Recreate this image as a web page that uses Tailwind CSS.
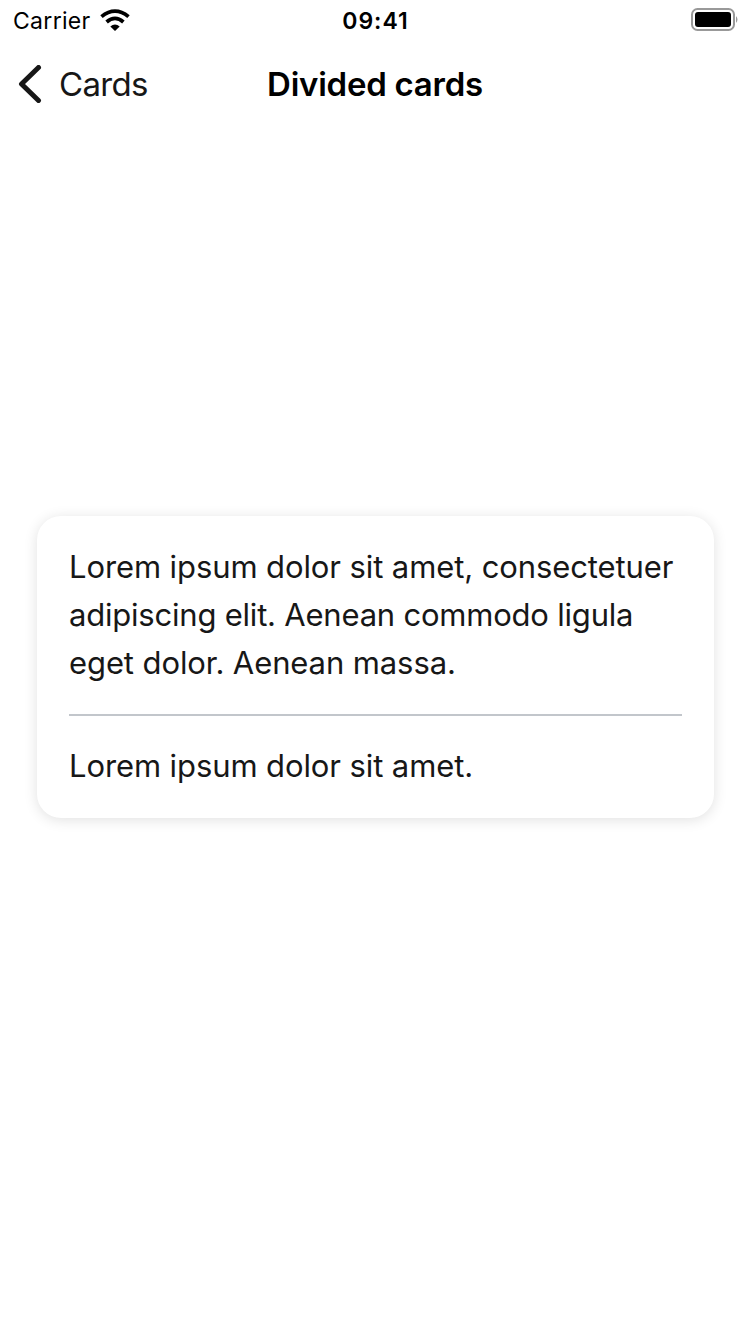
<!DOCTYPE html>
<html lang="en"><head><meta charset="utf-8"><title>Divided cards</title>
<script src="https://cdn.jsdelivr.net/npm/@tailwindcss/browser@4"></script></head>
<body class="bg-white">
<div class="w-[750px] h-[1334px] flex flex-col overflow-hidden font-['Inter',sans-serif] text-black">
<header>
<div class="h-10 grid grid-cols-3 items-center pl-[13px] pr-[11px]">
<div class="flex items-center gap-[9px]"><span class="text-[23px] leading-[38px] tracking-[0.3px] pt-0.5">Carrier</span>
<svg width="30" height="22" viewBox="0 0 30 22" fill="none" stroke="#000" stroke-width="3.800"><path d="M1.500 7.600Q15 -3.400 28.500 7.600"/><path d="M6.600 13Q15 5.800 23.400 13"/><path d="M15 22L10.300 17.500Q15 13.400 19.700 17.500Z" fill="#000" stroke="none"/></svg></div>
<div class="text-center text-[23px] font-semibold leading-[38px] tracking-[1px] pt-0.5 pr-px"><span>09:41</span></div>
<div class="flex justify-end"><svg width="48" height="24" viewBox="0 0 48 24"><rect x="1" y="1" width="42" height="21" rx="5.500" fill="none" stroke="#999" stroke-width="2"/><rect x="4" y="4" width="36" height="15" rx="3"/><path d="M45 8Q48 11.500 45 15Z" fill="#999"/></svg></div>
</div>
<nav class="h-22 grid grid-cols-3 items-center px-[18px]">
<div class="flex items-center gap-[17px] text-[#171717]"><svg width="24" height="38" viewBox="0 0 24 38" fill="none" stroke="currentColor" stroke-width="5" stroke-linecap="round" stroke-linejoin="round"><path d="M20.500 2.500L3.500 19L20.500 35.500"/></svg><span class="text-[33px] tracking-[-0.7px] pt-0.5">Cards</span></div>
<h1 class="text-center whitespace-nowrap text-[33px] font-semibold tracking-[-0.25px] pt-0.5">Divided cards</h1>
</nav></header>
<main class="pt-[388px] pl-[37px] pr-[36px]">
<section class="rounded-3xl bg-white h-[302px] px-8 pt-[27px] text-[31px] leading-[48px] tracking-[-0.1px] text-[#171717] shadow-[0_2px_14px_rgba(0,0,0,0.12)]">
<p class="whitespace-nowrap"><span>Lorem ipsum dolor sit amet, consectetuer</span><br><span class="tracking-[-0.21px]">adipiscing elit. Aenean commodo ligula</span><br><span>eget dolor. Aenean massa.</span></p>
<hr class="mt-[27px] border-0 h-[2px] bg-[#c2c6cb]">
<p class="pt-[26px]"><span>Lorem ipsum dolor sit amet.</span></p>
</section></main></div></body></html>
